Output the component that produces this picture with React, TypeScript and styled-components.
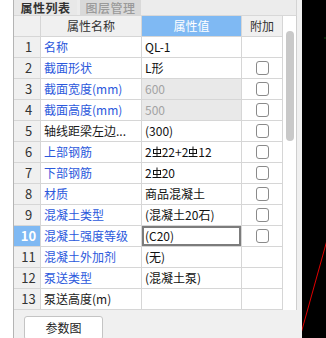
import React from "react";
import styled, { createGlobalStyle } from "styled-components";

const Global = createGlobalStyle`
  html, body { margin: 0; padding: 0; background: #ffffff; }
  body { font-family: "Noto Sans CJK SC", "Noto Sans", sans-serif; }
  * { box-sizing: border-box; }
`;

const Screen = styled.div`
  display: flex;
  width: 326px;
  height: 338px;
  overflow: hidden;
`;

const LeftStrip = styled.div`
  width: 14px;
  flex: none;
  background: #ffffff;
  border-right: 1px solid #b4b4b4;
`;

const Main = styled.div`
  width: 288px;
  flex: none;
  display: flex;
  flex-direction: column;
  background: #f0f0f0;
`;

const TabBar = styled.div`
  height: 15px;
  width: 283px;
  display: flex;
  gap: 3px;
  background: #ececec;
  border-right: 1px solid #d4d4d4;
`;

const Tab = styled.div<{ $active?: boolean }>`
  width: ${(p) => (p.$active ? "63px" : "61px")};
  height: 15px;
  display: flex;
  justify-content: center;
  align-items: center;
  font-size: 12px;
  line-height: 15px;
  font-weight: ${(p) => (p.$active ? 700 : 500)};
  color: ${(p) => (p.$active ? "#333333" : "#9a9a9a")};
  background: ${(p) => (p.$active ? "#e8e8e8" : "#d9d9d9")};
  letter-spacing: 0.5px;
`;

const Panel = styled.div`
  display: flex;
  width: 283px;
  height: 295px;
  background: #ffffff;
  border-top: 1px solid #d8d8d8;
  border-right: 1px solid #cfcfcf;
`;

const Grid = styled.div`
  display: grid;
  grid-template-columns: 27px 101px 100px 41px;
  grid-auto-rows: 21px;
  width: 269px;
  align-content: start;
`;

const Cell = styled.div`
  border-right: 1px solid #d6d6d6;
  border-bottom: 1px solid #d6d6d6;
  display: flex;
  align-items: center;
  font-size: 12px;
  line-height: 20px;
  white-space: nowrap;
  overflow: hidden;
`;

const HeaderCell = styled(Cell)<{ $active?: boolean }>`
  justify-content: center;
  background: ${(p) => (p.$active ? "#7fb9f3" : "#f0f0f0")};
  color: ${(p) => (p.$active ? "#ffffff" : "#333333")};
`;

const NumCell = styled(Cell)<{ $selected?: boolean }>`
  justify-content: center;
  padding-left: 3px;
  font-size: 13px;
  background: ${(p) => (p.$selected ? "#7fb9f3" : "#f0f0f0")};
  color: ${(p) => (p.$selected ? "#ffffff" : "#333333")};
  font-weight: ${(p) => (p.$selected ? 700 : 400)};
`;

const NameCell = styled(Cell)<{ $blue?: boolean }>`
  padding-left: 3px;
  color: ${(p) => (p.$blue ? "#2b58dc" : "#1a1a1a")};
`;

const ValueCell = styled(Cell)<{ $disabled?: boolean; $focused?: boolean }>`
  padding-left: 3px;
  color: ${(p) => (p.$disabled ? "#a3a3a3" : "#111111")};
  background: ${(p) => (p.$disabled ? "#e9e9e9" : "#ffffff")};
  box-shadow: ${(p) => (p.$focused ? "inset 0 0 0 2px #7c7c7c" : "none")};
`;

const AddCell = styled(Cell)`
  justify-content: center;
`;

const CheckBox = styled.div`
  width: 13px;
  height: 14px;
  border: 1px solid #8a8a8a;
  border-radius: 3px;
  background: #ffffff;
`;

const ScrollTrack = styled.div`
  flex: 1;
  padding: 15px 0 0 3px;
`;

const Thumb = styled.div`
  width: 8px;
  height: 110px;
  border-radius: 4px;
  background: #c9c9c9;
`;

const Footer = styled.div`
  flex: 1;
  padding: 4px 0 0 10px;
`;

const Button = styled.button`
  width: 79px;
  height: 24px;
  border: 1px solid #c4c4c4;
  border-radius: 3px;
  background: #ffffff;
  font-family: "Noto Sans CJK SC", "Noto Sans", sans-serif;
  font-size: 12px;
  color: #222222;
  padding: 0;
`;

const Canvas = styled.div`
  flex: 1;
  background: #000000;
`;

const Rebar = () => (
  <svg width="10" height="12" viewBox="0 0 10 12" style={{ margin: "0 0 1px 0" }}>
    <rect x="1.5" y="3.5" width="7" height="4" fill="none" stroke="#111" strokeWidth="1" />
    <line x1="5" y1="0.5" x2="5" y2="10.5" stroke="#111" strokeWidth="1" />
    <line x1="0.5" y1="10.5" x2="9.5" y2="10.5" stroke="#111" strokeWidth="1" />
  </svg>
);

type Row = {
  n: number;
  name: string;
  blue: boolean;
  value: React.ReactNode;
  check: boolean;
  disabled?: boolean;
  selected?: boolean;
};

const rows: Row[] = [
  { n: 1, name: "名称", blue: true, value: "QL-1", check: false },
  { n: 2, name: "截面形状", blue: true, value: "L形", check: true },
  { n: 3, name: "截面宽度(mm)", blue: true, value: "600", check: true, disabled: true },
  { n: 4, name: "截面高度(mm)", blue: true, value: "500", check: true, disabled: true },
  { n: 5, name: "轴线距梁左边...", blue: false, value: "(300)", check: true },
  {
    n: 6,
    name: "上部钢筋",
    blue: true,
    value: (
      <>
        2<Rebar />22+2<Rebar />12
      </>
    ),
    check: true,
  },
  {
    n: 7,
    name: "下部钢筋",
    blue: true,
    value: (
      <>
        2<Rebar />20
      </>
    ),
    check: true,
  },
  { n: 8, name: "材质", blue: true, value: "商品混凝土", check: true },
  { n: 9, name: "混凝土类型", blue: true, value: "(混凝土20石)", check: true },
  { n: 10, name: "混凝土强度等级", blue: true, value: "(C20)", check: true, selected: true },
  { n: 11, name: "混凝土外加剂", blue: true, value: "(无)", check: false },
  { n: 12, name: "泵送类型", blue: true, value: "(混凝土泵)", check: false },
  { n: 13, name: "泵送高度(m)", blue: false, value: "", check: false },
];

export default function App() {
  return (
    <>
      <Global />
      <Screen>
        <LeftStrip />
        <Main>
          <TabBar>
            <Tab $active>属性列表</Tab>
            <Tab>图层管理</Tab>
          </TabBar>
          <Panel>
            <Grid>
              <HeaderCell />
              <HeaderCell>属性名称</HeaderCell>
              <HeaderCell $active>属性值</HeaderCell>
              <HeaderCell>附加</HeaderCell>
              {rows.map((r) => (
                <React.Fragment key={r.n}>
                  <NumCell $selected={r.selected}>{r.n}</NumCell>
                  <NameCell $blue={r.blue}>{r.name}</NameCell>
                  <ValueCell $disabled={r.disabled} $focused={r.selected}>
                    {r.value}
                  </ValueCell>
                  <AddCell>{r.check && <CheckBox />}</AddCell>
                </React.Fragment>
              ))}
            </Grid>
            <ScrollTrack>
              <Thumb />
            </ScrollTrack>
          </Panel>
          <Footer>
            <Button>参数图</Button>
          </Footer>
        </Main>
        <Canvas>
          <svg width="24" height="338" viewBox="0 0 24 338">
            <line x1="-2" y1="337" x2="24.5" y2="242" stroke="#e00000" strokeWidth="1" />
            <rect x="22.5" y="37.5" width="1" height="1" fill="#1f8f1f" />
          </svg>
        </Canvas>
      </Screen>
    </>
  );
}
